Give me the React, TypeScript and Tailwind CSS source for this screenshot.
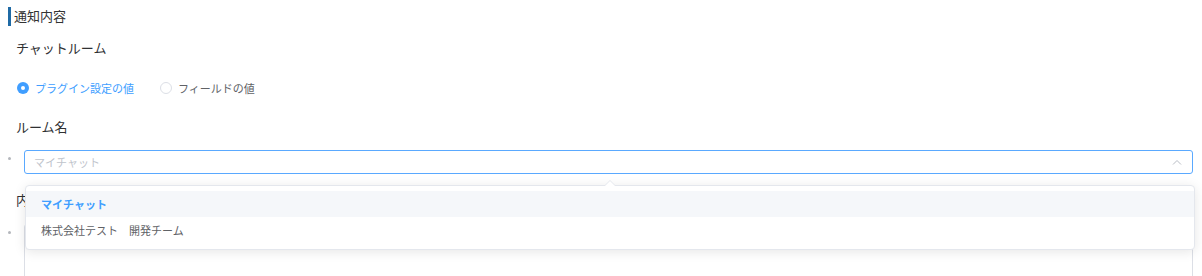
import React from "react";

const font = { fontFamily: '"Noto Sans CJK JP", "Noto Sans", sans-serif' };

function Radio({ checked, label }: { checked?: boolean; label: string }) {
    return (
        <label className="flex items-center mr-[26px]">
            <span
                className={
                    checked
                        ? "w-[12px] h-[12px] rounded-full bg-[#409eff] flex items-center justify-center"
                        : "w-[12px] h-[12px] rounded-full border border-[#dcdfe6] bg-white"
                }
            >
                {checked && <span className="w-[4px] h-[4px] rounded-full bg-white" />}
            </span>
            <span className={checked ? "ml-[6px] text-[11px] text-[#409eff]" : "ml-[6px] text-[11px] text-[#606266]"}>
                {label}
            </span>
        </label>
    );
}

function Dot() {
    return (
        <span className="w-[24px] pl-[8px] pt-[7px] flex">
            <span className="w-[3px] h-[3px] rounded-full bg-[#b4b7bc]" />
        </span>
    );
}

export default function App() {
    return (
        <div className="w-[1202px] h-[276px] bg-white overflow-hidden" style={font}>
            <div className="pt-[7px] pl-[8px]">
                <div className="flex items-center h-[19px] border-l-[3px] border-[#1f6aa5] pl-[3px]">
                    <span className="text-[13px] leading-none text-[#333] -mt-[2px]">通知内容</span>
                </div>
            </div>

            <div className="pl-[16px] mt-[12px] h-[20px] flex items-center text-[13px] text-[#303133]">チャットルーム</div>

            <div className="pl-[17px] mt-[20px] h-[20px] flex items-center">
                <Radio checked label="プラグイン設定の値" />
                <Radio label="フィールドの値" />
            </div>

            <div className="pl-[16px] mt-[19px] h-[20px] flex items-center text-[13px] text-[#303133]">ルーム名</div>

            <div className="relative mt-[13px] flex items-start">
                <Dot />
                <div className="w-[1169px] h-[24px] border border-[#5aa9ff] rounded-[3px] flex items-center pl-[9px] pr-[9px]">
                    <span className="text-[11px] text-[#c0c4cc] flex-1">マイチャット</span>
                    <svg width="10" height="6" viewBox="0 0 10 6" className="mr-[1px]">
                        <path d="M1 5.5 L5 1.5 L9 5.5" fill="none" stroke="#b8bcc4" strokeWidth="1" />
                    </svg>
                </div>

                {/* dropdown */}
                <div className="absolute left-[25px] top-[35px] w-[1170px] z-10 bg-white border border-[#e4e7ed] rounded-[4px] shadow-[0_2px_12px_0_rgba(0,0,0,0.1)] py-[5px]">
                    <div className="absolute left-1/2 -top-[6px] -translate-x-1/2 w-0 h-0 border-x-[6px] border-x-transparent border-b-[6px] border-b-[#e4e7ed]" />
                    <div className="absolute left-1/2 -top-[5px] -translate-x-1/2 w-0 h-0 border-x-[6px] border-x-transparent border-b-[6px] border-b-white" />
                    <div className="h-[26px] flex items-center pl-[15px] bg-[#f5f7fa] text-[11px] font-bold text-[#409eff]">マイチャット</div>
                    <div className="h-[27px] flex items-center pl-[15px] text-[11px] text-[#606266]">株式会社テスト　開発チーム</div>
                </div>
            </div>

            <div className="pl-[16px] mt-[16px] h-[20px] flex items-center text-[13px] text-[#303133]">内容</div>

            <div className="mt-[14px] flex items-start">
                <Dot />
                <div className="w-[1169px] h-[80px] border border-[#dcdfe6] rounded-[3px]" />
            </div>
        </div>
    );
}
